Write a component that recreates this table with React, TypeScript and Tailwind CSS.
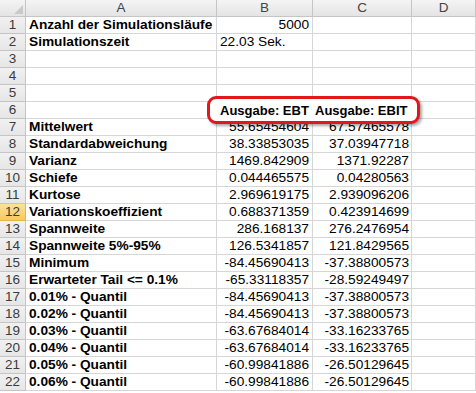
import React from 'react';

type Row = {
  label?: string;
  b?: string;
  c?: string;
  bAlign?: 'left' | 'right';
  header?: boolean;
};

const rows: Row[] = [
  { label: 'Anzahl der Simulationsläufe', b: '5000' },
  { label: 'Simulationszeit', b: '22.03 Sek.', bAlign: 'left' },
  {},
  {},
  {},
  { b: 'Ausgabe: EBT', c: 'Ausgabe: EBIT', header: true },
  { label: 'Mittelwert', b: '55.65454604', c: '67.57465578' },
  { label: 'Standardabweichung', b: '38.33853035', c: '37.03947718' },
  { label: 'Varianz', b: '1469.842909', c: '1371.92287' },
  { label: 'Schiefe', b: '0.044465575', c: '0.04280563' },
  { label: 'Kurtose', b: '2.969619175', c: '2.939096206' },
  { label: 'Variationskoeffizient', b: '0.688371359', c: '0.423914699' },
  { label: 'Spannweite', b: '286.168137', c: '276.2476954' },
  { label: 'Spannweite 5%-95%', b: '126.5341857', c: '121.8429565' },
  { label: 'Minimum', b: '-84.45690413', c: '-37.38800573' },
  { label: 'Erwarteter Tail <= 0.1%', b: '-65.33118357', c: '-28.59249497' },
  { label: '0.01% - Quantil', b: '-84.45690413', c: '-37.38800573' },
  { label: '0.02% - Quantil', b: '-84.45690413', c: '-37.38800573' },
  { label: '0.03% - Quantil', b: '-63.67684014', c: '-33.16233765' },
  { label: '0.04% - Quantil', b: '-63.67684014', c: '-33.16233765' },
  { label: '0.05% - Quantil', b: '-60.99841886', c: '-26.50129645' },
  { label: '0.06% - Quantil', b: '-60.99841886', c: '-26.50129645' },
];

const ACTIVE_ROW = 12;

function ColumnHeaders() {
  const head =
    'h-[17px] flex items-center justify-center border-r border-b border-[#c5c5c5] bg-gradient-to-b from-[#f4f4f4] to-[#e4e4e4] text-[#444] text-[13.5px] leading-none';
  return (
    <div className="flex">
      <div className={`${head} relative w-[26px] shrink-0`}>
        <span className="absolute right-[2px] bottom-[2px] w-0 h-0 border-l-[9px] border-l-transparent border-b-[9px] border-b-[#cacaca]" />
      </div>
      <div className={`${head} w-[191px] shrink-0`}>A</div>
      <div className={`${head} w-[96px] shrink-0`}>B</div>
      <div className={`${head} w-[99px] shrink-0`}>C</div>
      <div className={`${head} flex-1`}>D</div>
    </div>
  );
}

function SheetRow({ n, row }: { n: number; row: Row }) {
  const cell =
    'h-[17px] border-r border-b border-[#d6d6d6] flex items-center text-[13.7px] leading-none text-black whitespace-nowrap';
  const active = n === ACTIVE_ROW;
  const rowHead = active
    ? 'bg-gradient-to-b from-[#fbe19b] to-[#f6c95a] border-[#e5b74a]'
    : 'bg-gradient-to-b from-[#f1f1f1] to-[#e6e6e6] border-[#c5c5c5]';
  // the output labels sit above the callout box
  const label = row.header ? 'relative z-10 font-bold text-[13px]' : '';
  return (
    <div className="flex">
      <div
        className={`h-[17px] w-[26px] shrink-0 border-r border-b ${rowHead} flex items-center justify-center text-[13.5px] leading-none text-[#3b3b3b]`}
      >
        {n}
      </div>
      <div className={`${cell} w-[191px] shrink-0 pl-[3px] font-bold`}>{row.label}</div>
      <div
        className={`${cell} w-[96px] shrink-0 ${
          row.bAlign === 'left' || row.header ? 'justify-start pl-[3px]' : 'justify-end pr-[3px]'
        }`}
      >
        <span className={label}>{row.b}</span>
      </div>
      <div className={`${cell} w-[99px] shrink-0 ${row.header ? 'justify-start pl-[2px]' : 'justify-end pr-[2px]'}`}>
        <span className={label}>{row.c}</span>
      </div>
      <div className={`${cell} flex-1`} />
    </div>
  );
}

export default function App() {
  return (
    <div
      className="relative w-[476px] h-[393px] overflow-hidden bg-white"
      style={{ fontFamily: '"Liberation Sans", Arial, sans-serif' }}
    >
      <ColumnHeaders />
      {rows.map((row, i) => (
        <SheetRow key={i} n={i + 1} row={row} />
      ))}
      {/* callout around the two output headers */}
      <div className="absolute left-[207px] top-[96px] w-[213px] h-[28px] z-[5] rounded-[9px] border-[3px] border-[#e2171b] bg-white shadow-[2px_2px_3px_rgba(0,0,0,0.35)]" />
    </div>
  );
}
